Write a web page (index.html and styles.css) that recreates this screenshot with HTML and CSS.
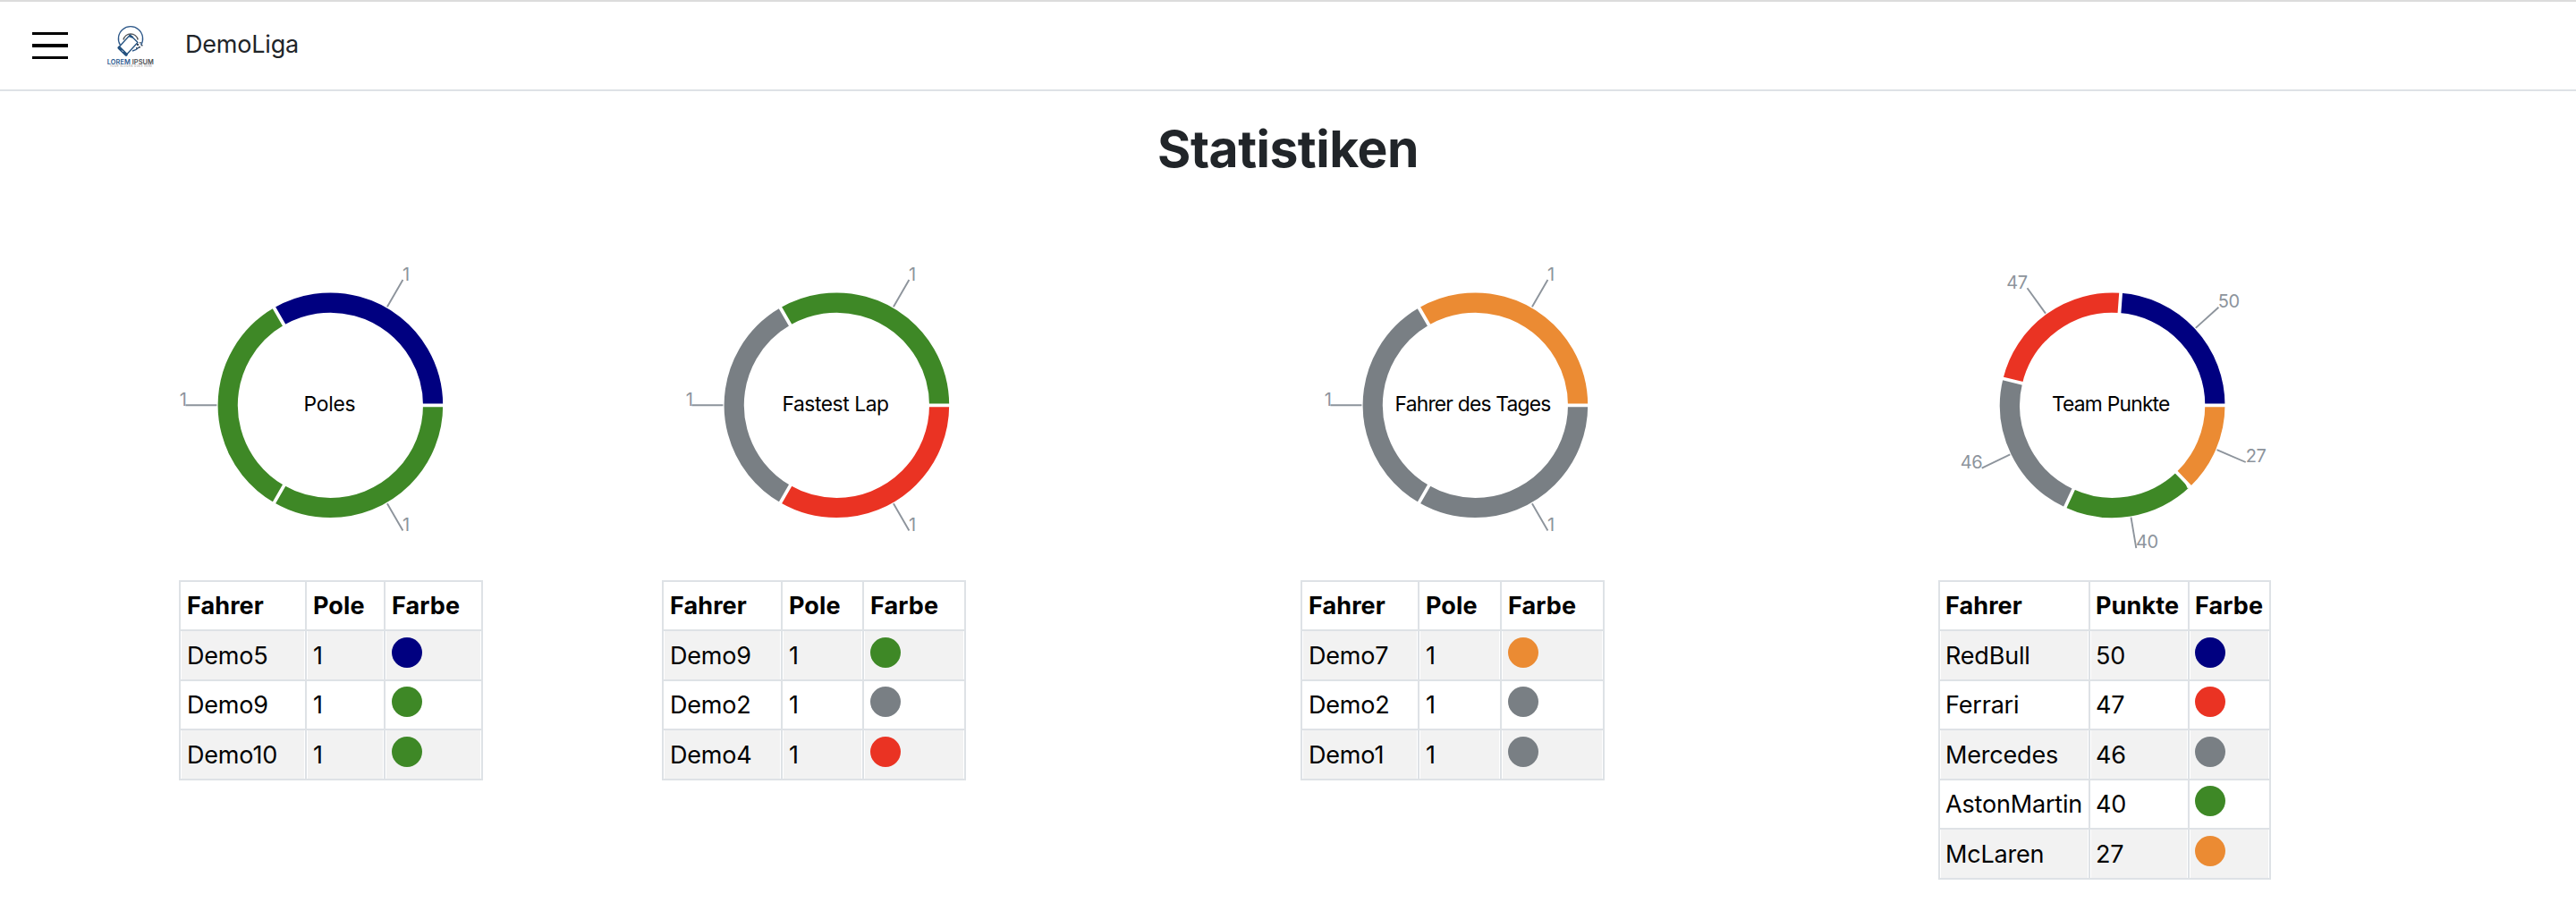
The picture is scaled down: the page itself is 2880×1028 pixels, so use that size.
FILE: index.html
```html
<!DOCTYPE html>
<html lang="de">
<head>
<meta charset="utf-8">
<title>DemoLiga – Statistiken</title>
<link rel="stylesheet" href="styles.css">
</head>
<body>
<header class="navbar">
  <svg class="menu" width="40" height="30" viewBox="0 0 40 30"><path d="M0 0h40v3H0zM0 13h40v4H0zM0 27h40v3H0z"/></svg>
  <svg class="logo" width="54" height="48" viewBox="0 0 54 48">
    <g fill="none">
      <path d="M15.5 23.5A13.6 13.6 0 1 1 38.5 23.5M36.5 25.8A13.6 13.6 0 0 1 29 30" stroke="#2c5788" stroke-width="1.3"/>
      <path d="M19 17.5A8.3 8.3 0 0 1 35.2 17.5" stroke="#55575b" stroke-width="1.4"/>
      <path d="M26.5 12 35 20.5 22.3 34.3 13.6 26z" fill="#fff" stroke="#23517f" stroke-width="1.3" stroke-linejoin="round"/>
      <path d="M14.2 26.4 22 34" stroke="#23517f" stroke-width="3.6" stroke-linecap="round"/>
      <path d="M25.3 13.2 29.5 14.8" stroke="#23517f" stroke-width="2"/>
      <path d="M17.3 29.5 18.6 30.8" stroke="#fff" stroke-width="1"/>
    </g>
    <path d="M34 22h2v2h-2zM37 20h1.5v1.5H37zM39 23h1.5v1.5H39zM36 25h2v1.5h-2zM33 26h1.5v1.5H33z" fill="#3c4857"/>
    <text class="logo-name" x="0.8" y="44.6" textLength="52"><tspan fill="#2f5b92">LOREM</tspan><tspan fill="#4c4e52"> IPSUM</tspan></text>
    <text class="logo-slogan" x="4" y="47.8" textLength="47">YOUR SLOGAN GOES HERE</text>
  </svg>
  <span class="brand">DemoLiga</span>
</header>
<main>
  <h1>Statistiken</h1>
  <div class="stats">
    <section class="stat">
      <svg class="pie" width="372" height="349" viewBox="-169.4 -153.3 372 349">
        <g class="ring">
          <circle r="114.7" pathLength="360" class="navy" stroke-dasharray="120 240" transform="rotate(-120)"/>
          <circle r="114.7" pathLength="360" class="green" stroke-dasharray="120 240" transform="rotate(-240)"/>
          <circle r="114.7" pathLength="360" class="green" stroke-dasharray="120 240"/>
        </g>
        <path class="gap" d="M100 0H130M-50-86.6-65-112.6M-50 86.6-65 112.6"/>
        <path class="tick" d="M63.5-110 81-140.3M-127 0H-162M63.5 110 81 140.3"/>
        <g class="label"><text x="80.7" y="-139.3">1</text><text x="-161" y="0.5" class="end">1</text><text x="80.7" y="140.6">1</text></g>
        <text class="name" x="-29.8" y="6.7" textLength="58">Poles</text>
      </svg>
      <table>
        <colgroup><col style="width:141px"><col style="width:88px"><col style="width:109px"></colgroup>
        <tr><th>Fahrer</th><th>Pole</th><th>Farbe</th></tr>
        <tr><td>Demo5</td><td>1</td><td><i class="dot navy"></i></td></tr>
        <tr><td>Demo9</td><td>1</td><td><i class="dot green"></i></td></tr>
        <tr><td>Demo10</td><td>1</td><td><i class="dot green"></i></td></tr>
      </table>
    </section>
    <section class="stat">
      <svg class="pie" width="372" height="349" viewBox="-195.4 -153.3 372 349">
        <g class="ring">
          <circle r="114.7" pathLength="360" class="green" stroke-dasharray="120 240" transform="rotate(-120)"/>
          <circle r="114.7" pathLength="360" class="grey" stroke-dasharray="120 240" transform="rotate(-240)"/>
          <circle r="114.7" pathLength="360" class="red" stroke-dasharray="120 240"/>
        </g>
        <path class="gap" d="M100 0H130M-50-86.6-65-112.6M-50 86.6-65 112.6"/>
        <path class="tick" d="M63.5-110 81-140.3M-127 0H-162M63.5 110 81 140.3"/>
        <g class="label"><text x="80.7" y="-139.3">1</text><text x="-161" y="0.5" class="end">1</text><text x="80.7" y="140.6">1</text></g>
        <text class="name" x="-60.9" y="6.7" textLength="119.5">Fastest Lap</text>
      </svg>
      <table>
        <colgroup><col style="width:133px"><col style="width:91px"><col style="width:114px"></colgroup>
        <tr><th>Fahrer</th><th>Pole</th><th>Farbe</th></tr>
        <tr><td>Demo9</td><td>1</td><td><i class="dot green"></i></td></tr>
        <tr><td>Demo2</td><td>1</td><td><i class="dot grey"></i></td></tr>
        <tr><td>Demo4</td><td>1</td><td><i class="dot red"></i></td></tr>
      </table>
    </section>
    <section class="stat">
      <svg class="pie" width="372" height="349" viewBox="-195.4 -153.3 372 349">
        <g class="ring">
          <circle r="114.7" pathLength="360" class="orange" stroke-dasharray="120 240" transform="rotate(-120)"/>
          <circle r="114.7" pathLength="360" class="grey" stroke-dasharray="120 240" transform="rotate(-240)"/>
          <circle r="114.7" pathLength="360" class="grey" stroke-dasharray="120 240"/>
        </g>
        <path class="gap" d="M100 0H130M-50-86.6-65-112.6M-50 86.6-65 112.6"/>
        <path class="tick" d="M63.5-110 81-140.3M-127 0H-162M63.5 110 81 140.3"/>
        <g class="label"><text x="80.7" y="-139.3">1</text><text x="-161" y="0.5" class="end">1</text><text x="80.7" y="140.6">1</text></g>
        <text class="name" x="-89.8" y="6.7" textLength="174.7">Fahrer des Tages</text>
      </svg>
      <table>
        <colgroup><col style="width:131px"><col style="width:92px"><col style="width:115px"></colgroup>
        <tr><th>Fahrer</th><th>Pole</th><th>Farbe</th></tr>
        <tr><td>Demo7</td><td>1</td><td><i class="dot orange"></i></td></tr>
        <tr><td>Demo2</td><td>1</td><td><i class="dot grey"></i></td></tr>
        <tr><td>Demo1</td><td>1</td><td><i class="dot grey"></i></td></tr>
      </table>
    </section>
    <section class="stat">
      <svg class="pie" width="372" height="349" viewBox="-194.7 -153.3 372 349">
        <g class="ring">
          <circle r="114.7" pathLength="360" class="navy" stroke-dasharray="85.71 274.29" transform="rotate(-85.71)"/>
          <circle r="114.7" pathLength="360" class="red" stroke-dasharray="80.58 279.42" transform="rotate(-166.29)"/>
          <circle r="114.7" pathLength="360" class="grey" stroke-dasharray="78.85 281.15" transform="rotate(-245.14)"/>
          <circle r="114.7" pathLength="360" class="green" stroke-dasharray="68.57 291.43" transform="rotate(-313.71)"/>
          <circle r="114.7" pathLength="360" class="orange" stroke-dasharray="46.29 313.71"/>
        </g>
        <path class="gap" d="M100 0H130M7.5-99.7 9.7-129.6M-97.2-23.7-126.3-30.8M-42.05 90.7-54.7 118M69.1 72.3 89.8 94"/>
        <path class="tick" d="M93.1-86.4 118.7-109.5M-74.7-102.7-95.2-131M-114.4 55.1-146 70.3M20.8 125.3 26.6 159.8M116.8 49.9 149 63.7"/>
        <g class="label"><text x="118" y="-109">50</text><text x="-95" y="-130">47</text><text x="-145.5" y="70.6">46</text><text x="26.2" y="160">40</text><text x="149" y="64">27</text></g>
        <text class="name" x="-67.8" y="6.7" textLength="132.5">Team Punkte</text>
      </svg>
      <table class="teams">
        <colgroup><col style="width:168px"><col style="width:111px"><col style="width:91px"></colgroup>
        <tr><th>Fahrer</th><th>Punkte</th><th>Farbe</th></tr>
        <tr><td>RedBull</td><td>50</td><td><i class="dot navy"></i></td></tr>
        <tr><td>Ferrari</td><td>47</td><td><i class="dot red"></i></td></tr>
        <tr><td>Mercedes</td><td>46</td><td><i class="dot grey"></i></td></tr>
        <tr><td>AstonMartin</td><td>40</td><td><i class="dot green"></i></td></tr>
        <tr><td>McLaren</td><td>27</td><td><i class="dot orange"></i></td></tr>
      </table>
    </section>
  </div>
</main>
</body>
</html>
```
FILE: styles.css
```css
* { box-sizing: border-box; }
body {
  margin: 0;
  background: #fff;
  color: #000;
  font: 400 27px/40px Inter, "Liberation Sans", sans-serif;
}
.navbar {
  display: flex;
  align-items: center;
  height: 102px;
  padding: 0 36px 2px;
  border-top: 2px solid #dcdcdc;
  border-bottom: 2px solid #dee2e6;
}
.menu { flex: none; margin-top: 2px; }
.logo { flex: none; margin: 2px 0 0 43px; overflow: visible; }
.logo-name { font-size: 7.4px; font-weight: 600; }
.logo-slogan { font-size: 2.8px; fill: #888; }
.brand { margin-left: 34px; color: #212529; letter-spacing: -.2px; }

h1 {
  margin: 0;
  padding: 30px 0 29px;
  text-align: center;
  color: #212529;
  font-size: 57px;
  font-weight: 700;
  line-height: 70px;
  letter-spacing: -.5px;
}
.stats {
  display: grid;
  grid-template-columns: 540px 714px 713px 372px;
  align-items: start;
  padding: 69px 0 0 200px;
}
.pie { display: block; overflow: visible; }
.ring circle { fill: none; stroke-width: 22.2; }
.gap { stroke: #fff; stroke-width: 3.8; fill: none; }
.tick { stroke: #8d949c; stroke-width: 1.9; fill: none; }
.label { fill: #8d949c; font-size: 20px; letter-spacing: -.4px; }
.label .end, .label text[x^="-"] { text-anchor: end; }
.name { font-size: 22.8px; }

circle.navy { stroke: #000080; }
circle.green { stroke: #3e8826; }
circle.grey { stroke: #797f84; }
circle.red { stroke: #ea3323; }
circle.orange { stroke: #eb8b33; }
.dot.navy { background: #000080; }
.dot.green { background: #3e8826; }
.dot.grey { background: #797f84; }
.dot.red { background: #ea3323; }
.dot.orange { background: #eb8b33; }

table { border-collapse: collapse; table-layout: fixed; width: 0; }
tr { height: 55px; }
tr:nth-child(even) { height: 56px; }
th, td {
  border: 2px solid #dee2e6;
  padding: 0 7px;
  text-align: left;
  white-space: nowrap;
  vertical-align: middle;
}
th { font-weight: 700; letter-spacing: .1px; }
td { letter-spacing: -.18px; }
.teams th, .teams td { padding: 0 6px; }
tr:nth-child(even) td {
  background: #f2f2f2;
  box-shadow: inset 1px 0 #fff, inset -1px 0 #fff;
}
tr:nth-child(even) td:not(:last-child) { padding-top: 2px; }
.dot {
  display: block;
  width: 34px;
  height: 34px;
  margin-bottom: 6px;
  border-radius: 50%;
}
tr:nth-child(odd) .dot { margin-bottom: 7px; }
```
